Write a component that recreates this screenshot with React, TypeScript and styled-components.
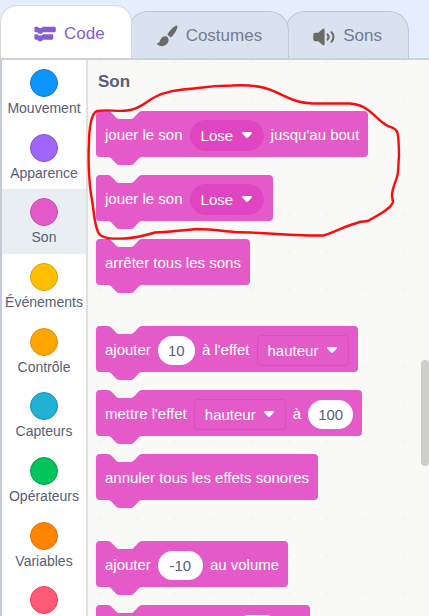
import React from "react";
import styled, { createGlobalStyle } from "styled-components";

const color = {
  block: "#e45ac8",
  blockDark: "#e045c1",
  blockLine: "#d950bd",
  paper: "#f9f9f7",
  text: "#575e75",
  accent: "#855cd6",
};

const GlobalStyle = createGlobalStyle`
  * { box-sizing: border-box; }
  html, body, #root { height: 100%; }
  body { margin: 0; overflow: hidden; }
  body, button, input, select {
    font-family: "Liberation Sans", Arial, Helvetica, sans-serif;
  }
`;

const Page = styled.div`
  position: relative;
  display: flex;
  flex-direction: column;
  height: 100vh;
  overflow: hidden;
  background: #e5eeff;
`;

const TabBar = styled.div`
  display: flex;
  flex: none;
  align-items: flex-end;
  height: 60px;
  border-bottom: 2px solid #ced2d8;
`;

const Tab = styled.button<{ $active?: boolean; $layer: number }>`
  position: relative;
  z-index: ${(p) => p.$layer};
  display: flex;
  align-items: center;
  gap: 8px;
  height: ${(p) => (p.$active ? 53 : 47)}px;
  margin: 0 0 0 ${(p) => (p.$active ? 0 : -4)}px;
  padding: ${(p) => (p.$active ? "3px 26px 0 33px" : "2px 26px 0 27px")};
  border: 1px solid ${(p) => (p.$active ? "#dcd8d6" : "#bfcad4")};
  border-bottom: 0;
  border-radius: ${(p) => (p.$active ? 17 : 20)}px ${(p) => (p.$active ? 17 : 20)}px 0 0;
  background: ${(p) => (p.$active ? "#ffffff" : "#d9e3ef")};
  color: ${(p) => (p.$active ? color.accent : "#737b8f")};
  font-size: 17px;
  line-height: 20px;
`;

const TabIcon = styled.svg`
  flex: none;
  width: 22px;
  height: 22px;
`;

const Body = styled.div`
  display: flex;
  flex: 1;
  min-height: 0;
`;

const Sidebar = styled.nav`
  flex: none;
  width: 88px;
  border-left: 2px solid #c3cada;
  border-right: 2px solid #e0e0e0;
  background: #ffffff;
`;

const CategoryList = styled.ul`
  display: flex;
  flex-direction: column;
  min-height: calc(100% + 26px);
  margin: 0;
  padding: 0;
  list-style: none;
`;

const CategoryItem = styled.li`
  display: flex;
  flex: 1;
`;

const CategoryButton = styled.button<{ $selected?: boolean }>`
  display: flex;
  flex: 1;
  flex-direction: column;
  align-items: center;
  gap: 3px;
  min-width: 0;
  padding: 9px 0 8px;
  border: 0;
  background: ${(p) => (p.$selected ? "#e9eef2" : "transparent")};
  color: ${color.text};
  font-size: 14px;
  line-height: 16px;
  white-space: nowrap;
`;

const Bubble = styled.span<{ $fill: string; $line: string }>`
  flex: none;
  width: 28px;
  height: 28px;
  border: 1px solid ${(p) => p.$line};
  border-radius: 50%;
  background: ${(p) => p.$fill};
`;

const Palette = styled.main`
  position: relative;
  flex: 1;
  min-width: 0;
  overflow: hidden;
  padding: 12px 8px 0;
  background: radial-gradient(circle, #f4f4f2 1px, transparent 2px) -8px -17px / 38px 38px
    ${color.paper};
`;

const Heading = styled.h2`
  margin: 0 0 19px;
  padding-left: 2px;
  color: ${color.text};
  font-size: 17px;
  line-height: 20px;
`;

const Group = styled.div`
  display: flex;
  flex-direction: column;
  align-items: flex-start;
  gap: 18px;
  margin-bottom: 41px;
`;

const BlockBox = styled.div`
  position: relative;
  display: flex;
  align-items: center;
  gap: 7px;
  height: 46px;
  padding: 2px 9px 0;
  border-radius: 4px;
  background: ${color.block};
  color: #ffffff;
  font-size: 15px;
  line-height: 18px;
  white-space: nowrap;
`;

const Connector = styled.svg<{ $bump?: boolean }>`
  position: absolute;
  left: 12px;
  ${(p) => (p.$bump ? "bottom: -8px;" : "top: 0;")}
  width: 34px;
  height: 8px;
  fill: ${(p) => (p.$bump ? color.block : color.paper)};
`;

const SelectBox = styled.span`
  position: relative;
  display: flex;
  align-items: center;
`;

const Select = styled.select<{ $round?: boolean }>`
  appearance: none;
  height: 31px;
  margin: 0;
  padding: 0 29px 0 10px;
  border: 1px solid ${(p) => (p.$round ? "#dc45bd" : color.blockLine)};
  border-radius: ${(p) => (p.$round ? 16 : 4)}px;
  background: ${(p) => (p.$round ? color.blockDark : color.block)};
  color: #ffffff;
  font-size: 15px;
`;

const Caret = styled.svg`
  position: absolute;
  right: 12px;
  width: 10px;
  height: 6px;
  fill: #ffffff;
  pointer-events: none;
`;

const NumberField = styled.input<{ $digits: number }>`
  width: ${(p) => 21 + p.$digits * 8}px;
  height: 29px;
  padding: 0;
  border: 0;
  border-radius: 15px;
  background: #ffffff;
  color: ${color.text};
  font-size: 15px;
  text-align: center;
`;

const ScrollThumb = styled.div`
  position: absolute;
  top: 54%;
  right: 0;
  width: 8px;
  height: 19%;
  border-radius: 4px;
  background: #d0cec8;
`;

const Marker = styled.svg`
  position: absolute;
  z-index: 5;
  top: 0;
  left: 0;
  width: 429px;
  height: 260px;
  fill: none;
  stroke: #ff0a0a;
  stroke-width: 2.4;
  stroke-linecap: round;
  stroke-linejoin: round;
  pointer-events: none;
`;

const connectorPath =
  "M0 0c2 0 3 1 4 2l4 4c1 1 2 2 4 2h12c2 0 3-1 4-2l4-4c1-1 2-2 4-2z";

function Block({ children }: { children: React.ReactNode }) {
  return (
    <BlockBox>
      <Connector viewBox="0 0 36 8" preserveAspectRatio="none" aria-hidden="true">
        <path d={connectorPath} />
      </Connector>
      {children}
      <Connector $bump viewBox="0 0 36 8" preserveAspectRatio="none" aria-hidden="true">
        <path d={connectorPath} />
      </Connector>
    </BlockBox>
  );
}

function Dropdown({ value, label, round }: { value: string; label: string; round?: boolean }) {
  return (
    <SelectBox>
      <Select $round={round} aria-label={label} defaultValue={value}>
        <option>{value}</option>
      </Select>
      <Caret viewBox="0 0 10 6" aria-hidden="true">
        <path d="M1.2 0h7.6c1 0 1.5 1 .8 1.8L6.2 5.3c-.7.8-1.7.8-2.4 0L.4 1.8C-.3 1 .2 0 1.2 0z" />
      </Caret>
    </SelectBox>
  );
}

function NumberInput({ value, label }: { value: string; label: string }) {
  return <NumberField $digits={value.length} defaultValue={value} aria-label={label} />;
}

const categories = [
  { name: "Mouvement", fill: "#0a95ff", line: "#1c78c8" },
  { name: "Apparence", fill: "#a064ff", line: "#8050d0" },
  { name: "Son", fill: "#e45ac8", line: "#c84eb0" },
  { name: "Événements", fill: "#ffbf00", line: "#dd9c10" },
  { name: "Contrôle", fill: "#ffa500", line: "#e08c10" },
  { name: "Capteurs", fill: "#22b1d4", line: "#1290b0" },
  { name: "Opérateurs", fill: "#04c45c", line: "#0a9a4c" },
  { name: "Variables", fill: "#ff8400", line: "#e07010" },
  { name: "Mes Blocs", fill: "#ff5a76", line: "#ff3355" },
];

export default function App() {
  return (
    <Page>
      <GlobalStyle />
      <TabBar role="tablist">
        <Tab $active $layer={3} role="tab" aria-selected="true">
          <TabIcon viewBox="0 0 22 22" fill={color.accent} aria-hidden="true">
            <path d="M1.700 3.800h1.800l1.400 1.300h2.600l1.400-1.300h11.600c.8 0 1.300.5 1.300 1.200v3c0 .7-.5 1.200-1.300 1.200H9.100l-1.400 1.500H4.700L3.300 9.200H1.700C1 9.200.4 8.700.4 8V5c0-.7.6-1.200 1.300-1.200z" />
            <path d="M1.700 11.300h1.600l1.400 1.300h3l1.400-1.300h8.800c.8 0 1.300.5 1.300 1.200v3c0 .7-.5 1.200-1.300 1.200H9.100l-1.400 1.500H4.700l-1.400-1.500H1.700c-.7 0-1.300-.5-1.300-1.200v-3c0-.7.6-1.200 1.300-1.200z" />
          </TabIcon>
          Code
        </Tab>
        <Tab $layer={2} role="tab" aria-selected="false">
          <TabIcon viewBox="0 0 22 22" fill="#6b6a65" aria-hidden="true">
            <path d="M20.900.7c.9.600.6 1.900-.1 3.500-1.300 3.100-3.500 6.300-6.200 8.400l-3.300-3C13 6.300 16 3 19 1.200c.7-.5 1.400-.8 1.900-.5z" />
            <path d="M10.300 11.200c1.500.9 2.400 2.200 2.300 3.900-.1 3.700-3.800 6.500-7.600 6-2.200-.3-3.900-1.600-4.500-2.900 1.500.3 2.800-.2 3.200-1.600.7-2.700 2.500-6 6.600-5.400z" />
          </TabIcon>
          Costumes
        </Tab>
        <Tab $layer={1} role="tab" aria-selected="false">
          <TabIcon viewBox="0 0 22 22" fill="#6b6a65" aria-hidden="true">
            <path d="M9.600 3.900c1-.7 2-.2 2 1v14.200c0 1.200-1 1.700-2 1l-4.300-3.800H2.200C1 16.300.3 15.500.3 14.300V9.700C.3 8.500 1 7.700 2.200 7.700h3.100z" />
            <path
              d="M14.500 9.300c1.300 1.600 1.300 3.900 0 5.400M18.500 7.300c2.600 2.600 2.600 6.800 0 9.400"
              fill="none"
              stroke="#6b6a65"
              strokeWidth="2"
              strokeLinecap="round"
            />
          </TabIcon>
          Sons
        </Tab>
      </TabBar>
      <Body>
        <Sidebar>
          <CategoryList>
            {categories.map((c) => (
              <CategoryItem key={c.name}>
                <CategoryButton $selected={c.name === "Son"}>
                  <Bubble $fill={c.fill} $line={c.line} />
                  {c.name}
                </CategoryButton>
              </CategoryItem>
            ))}
          </CategoryList>
        </Sidebar>
        <Palette>
          <Heading>Son</Heading>
          <Group>
            <Block>
              <span>jouer le son</span>
              <Dropdown round value="Lose" label="son à jouer jusqu'au bout" />
              <span>jusqu'au bout</span>
            </Block>
            <Block>
              <span>jouer le son</span>
              <Dropdown round value="Lose" label="son à jouer" />
            </Block>
            <Block>
              <span>arrêter tous les sons</span>
            </Block>
          </Group>
          <Group>
            <Block>
              <span>ajouter</span>
              <NumberInput value="10" label="valeur à ajouter" />
              <span>à l'effet</span>
              <Dropdown value="hauteur" label="effet à modifier" />
            </Block>
            <Block>
              <span>mettre l'effet</span>
              <Dropdown value="hauteur" label="effet à régler" />
              <span>à</span>
              <NumberInput value="100" label="valeur de l'effet" />
            </Block>
            <Block>
              <span>annuler tous les effets sonores</span>
            </Block>
          </Group>
          <Group>
            <Block>
              <span>ajouter</span>
              <NumberInput value="-10" label="volume à ajouter" />
              <span>au volume</span>
            </Block>
            <Block>
              <span>mettre le volume à</span>
              <NumberInput value="100" label="volume" />
              <span>%</span>
            </Block>
          </Group>
          <ScrollThumb />
        </Palette>
      </Body>
      <Marker viewBox="0 0 429 260" aria-hidden="true">
        <path d="M97 111C107 109 117 112 127 110.500C141 109 146 101 155 97C168 90 182 90 198 88C212 86 222 85.500 232 85.500C244 85 258 85 268 89C278 92 286 98 297 101C303 103 308 103 313 103.500H350C358 104 363 106 368 110C375 115 380 122 387 125.500C391 128 396 127 397.500 133C399 140 399 148 399 157C398 163 399 170 397 177C395 184 392 188 392 196L393 202C391 209 378 215 368 221C364 222 360 221 357 223C345 226 335 232 323 235.500C300 236 270 233 235 232C222 231 212 229 198 229C182 230 169 232 155 232.500C143 236 135 238 125 238.500C113 239 101 239 98 232C94 222 94 212 92 200C89 185 88 160 89 143C89 130 91 113 97 111Z" />
      </Marker>
    </Page>
  );
}
